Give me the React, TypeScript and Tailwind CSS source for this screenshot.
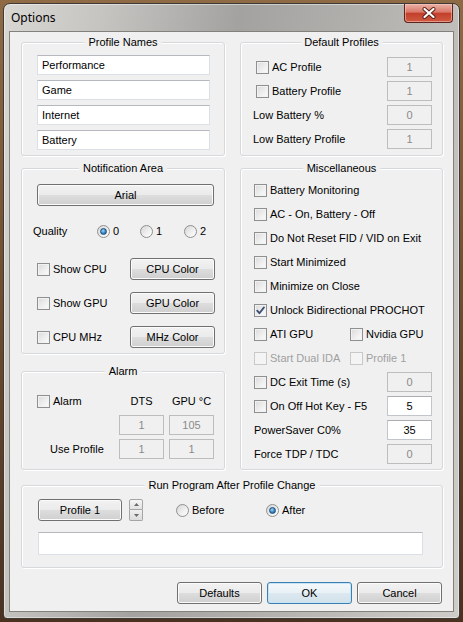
import React from 'react';

const btnGray =
  'rounded-[3px] border border-[#707070] bg-[linear-gradient(to_bottom,#f2f2f2_0%,#ebebeb_48%,#dddddd_52%,#cfcfcf_100%)] shadow-[inset_0_0_0_1px_#fbfbfb] flex items-center justify-center text-black';
const btnDefault =
  'rounded-[3px] border border-[#3c7fb1] bg-[linear-gradient(to_bottom,#f4f8fa_0%,#e9f1f6_48%,#dce8f0_52%,#d2e1ea_100%)] shadow-[inset_0_0_0_1px_#c4e5f6] flex items-center justify-center text-black';

function GroupBox({ title, className = '', children }: { title: string; className?: string; children: React.ReactNode }) {
  return (
    <div
      className={`relative rounded-[3px] border border-[#d5d9dc] shadow-[inset_1px_1px_0_#ffffff,1px_1px_0_#ffffff] ${className}`}
    >
      <span className="absolute left-1/2 top-[-8px] -translate-x-1/2 bg-[#f0f0f0] px-[4px] leading-[14px] whitespace-nowrap">
        {title}
      </span>
      {children}
    </div>
  );
}

function CheckBox({ label, checked = false, disabled = false }: { label: string; checked?: boolean; disabled?: boolean }) {
  return (
    <label className={`flex items-center gap-[3px] whitespace-nowrap ${disabled ? 'text-[#a0a0a0]' : 'text-black'}`}>
      <span
        className={`relative w-[13px] h-[13px] shrink-0 border ${
          disabled
            ? 'border-[#c8c8c8] bg-[#f4f4f4]'
            : 'border-[#8e8f8f] bg-[linear-gradient(135deg,#dadada_0%,#f0f0f0_60%,#fbfbfb_100%)] shadow-[inset_0_0_0_1px_#f2f2f2]'
        }`}
      >
        {checked && (
          <svg viewBox="0 0 11 11" className="absolute inset-0 w-[11px] h-[11px]">
            <path d="M2.2 5.6 L4.4 8.2 L9 2.4" fill="none" stroke="#3b4e72" strokeWidth="1.8" strokeLinecap="round" strokeLinejoin="round" />
          </svg>
        )}
      </span>
      {label}
    </label>
  );
}

function Radio({ label, checked = false }: { label: string; checked?: boolean }) {
  return (
    <label className="flex items-center gap-[3px] whitespace-nowrap">
      <span className="relative w-[13px] h-[13px] shrink-0 rounded-full border border-[#8e8f8f] bg-[linear-gradient(135deg,#d6d6d6_0%,#f1f1f1_60%,#fdfdfd_100%)] flex items-center justify-center">
        {checked && (
          <span className="w-[7px] h-[7px] rounded-full border border-[#1d4f7c] bg-[radial-gradient(circle_at_40%_35%,#9bd6f7_0%,#3a84c0_55%,#1c5589_100%)]" />
        )}
      </span>
      {label}
    </label>
  );
}

function NumBox({ value, enabled = false }: { value: string; enabled?: boolean }) {
  return (
    <div
      className={`w-[45px] h-[20px] shrink-0 border flex items-center justify-center ${
        enabled ? 'border-[#c2c6cc] border-t-[#abadb3] bg-white text-black' : 'border-[#bdbdbd] bg-[#f0f0f0] text-[#8a8a8a]'
      }`}
    >
      {value}
    </div>
  );
}

function TextBox({ value = '', className = '' }: { value?: string; className?: string }) {
  return (
    <div className={`h-[20px] border border-[#dbdfe6] border-t-[#b5b8bf] bg-white pl-[4px] flex items-center ${className}`}>
      {value}
    </div>
  );
}

function Spinner() {
  return (
    <div className="w-[14px] h-[22px] flex flex-col">
      <div className="h-[11px] border border-[#a5a5a5] rounded-t-[2px] bg-[linear-gradient(to_bottom,#f6f6f6,#e2e2e2)] flex items-center justify-center">
        <svg viewBox="0 0 5 3" className="w-[5px] h-[3px]">
          <path d="M0 3 L2.5 0 L5 3 Z" fill="#6a6a6a" />
        </svg>
      </div>
      <div className="h-[11px] border border-t-0 border-[#a5a5a5] rounded-b-[2px] bg-[linear-gradient(to_bottom,#f0f0f0,#dcdcdc)] flex items-center justify-center">
        <svg viewBox="0 0 5 3" className="w-[5px] h-[3px]">
          <path d="M0 0 L2.5 3 L5 0 Z" fill="#6a6a6a" />
        </svg>
      </div>
    </div>
  );
}

export default function App() {
  return (
    <div className="w-[463px] h-[622px] p-[3px] bg-[linear-gradient(to_bottom,#8e6b45_0%,#6d4c2f_50%,#4a3120_100%)] font-['Liberation_Sans',Arial,sans-serif] text-[11px] text-black">
      <div className="w-[457px] h-[616px] flex flex-col rounded-t-[7px] rounded-b-[4px] border border-[#3f3a36] bg-[linear-gradient(100deg,#d9d7d4_0%,#c6c4c1_18%,#a3a2a0_42%,#b3b1ae_65%,#cfcdca_100%)] shadow-[inset_0_0_0_1px_rgba(255,255,255,0.45)]">
        {/* title bar */}
        <div className="h-[27px] flex items-start justify-between pl-[7px] pr-[6px]">
          <span className="mt-[6px] font-['Noto_Sans','Open_Sans',sans-serif] text-[12px] leading-[16px] text-black">Options</span>
          <button className="w-[49px] h-[19px] rounded-b-[4px] border border-t-0 border-[#5e241b] bg-[linear-gradient(to_bottom,#eab2a5_0%,#d9786a_45%,#c4402b_52%,#cf5a42_100%)] shadow-[inset_0_0_0_1px_rgba(255,210,200,0.5)] flex items-center justify-center">
            <svg viewBox="0 0 14 12" className="w-[14px] h-[12px]">
              <path d="M2.5 2 L11.5 10 M11.5 2 L2.5 10" stroke="#5a1f16" strokeWidth="4" strokeLinecap="round" />
              <path d="M2.5 2 L11.5 10 M11.5 2 L2.5 10" stroke="#ffffff" strokeWidth="2.2" strokeLinecap="round" />
            </svg>
          </button>
        </div>

        {/* client area */}
        <div className="mx-[5px] h-[581px] border border-[#84807c] bg-[#f0f0f0] pt-[10px] pl-[11px] pr-[10px] flex flex-col">
          <div className="flex gap-[15px]">
            {/* left column */}
            <div className="w-[204px] flex flex-col">
              <GroupBox title="Profile Names" className="h-[114px] pt-[12px] pl-[15px] pr-[14px] flex flex-col gap-[5px]">
                <TextBox value="Performance" />
                <TextBox value="Game" />
                <TextBox value="Internet" />
                <TextBox value="Battery" />
              </GroupBox>

              <GroupBox title="Notification Area" className="mt-[12px] h-[186px] pt-[15px] pl-[15px] pr-[9px] flex flex-col">
                <button className={`${btnGray} w-[177px] h-[22px]`}>Arial</button>
                <div className="mt-[15px] h-[20px] flex items-center -ml-[4px]">
                  <span className="w-[64px]">Quality</span>
                  <div className="w-[43px]">
                    <Radio label="0" checked />
                  </div>
                  <div className="w-[44px]">
                    <Radio label="1" />
                  </div>
                  <Radio label="2" />
                </div>
                <div className="mt-[17px] flex flex-col gap-[12px]">
                  <div className="h-[22px] flex items-center justify-between">
                    <CheckBox label="Show CPU" />
                    <button className={`${btnGray} w-[85px] h-[22px]`}>CPU Color</button>
                  </div>
                  <div className="h-[22px] flex items-center justify-between">
                    <CheckBox label="Show GPU" />
                    <button className={`${btnGray} w-[85px] h-[22px]`}>GPU Color</button>
                  </div>
                  <div className="h-[22px] flex items-center justify-between">
                    <CheckBox label="CPU MHz" />
                    <button className={`${btnGray} w-[85px] h-[22px]`}>MHz Color</button>
                  </div>
                </div>
              </GroupBox>

              <GroupBox title="Alarm" className="mt-[17px] h-[99px] pt-[19px] pl-[15px] pr-[9px] flex flex-col gap-[4px]">
                <div className="h-[20px] flex items-center">
                  <div className="w-[82px]">
                    <CheckBox label="Alarm" />
                  </div>
                  <span className="w-[45px] text-center">DTS</span>
                  <span className="ml-[5px] w-[45px] text-center">GPU °C</span>
                </div>
                <div className="h-[20px] flex items-center">
                  <div className="w-[82px]" />
                  <NumBox value="1" />
                  <div className="ml-[5px]">
                    <NumBox value="105" />
                  </div>
                </div>
                <div className="h-[20px] flex items-center">
                  <span className="w-[82px] pl-[13px]">Use Profile</span>
                  <NumBox value="1" />
                  <div className="ml-[5px]">
                    <NumBox value="1" />
                  </div>
                </div>
              </GroupBox>
            </div>

            {/* right column */}
            <div className="w-[203px] flex flex-col">
              <GroupBox title="Default Profiles" className="h-[114px] pt-[14px] pl-[12px] pr-[10px] flex flex-col gap-[4px]">
                <div className="h-[20px] flex items-center justify-between">
                  <div className="ml-[3px]">
                    <CheckBox label="AC Profile" />
                  </div>
                  <NumBox value="1" />
                </div>
                <div className="h-[20px] flex items-center justify-between">
                  <div className="ml-[3px]">
                    <CheckBox label="Battery Profile" />
                  </div>
                  <NumBox value="1" />
                </div>
                <div className="h-[20px] flex items-center justify-between">
                  <span>Low Battery %</span>
                  <NumBox value="0" />
                </div>
                <div className="h-[20px] flex items-center justify-between">
                  <span>Low Battery Profile</span>
                  <NumBox value="1" />
                </div>
              </GroupBox>

              <GroupBox title="Miscellaneous" className="mt-[12px] h-[302px] pt-[11px] pl-[13px] pr-[10px] flex flex-col gap-[4px]">
                <div className="h-[20px] flex items-center">
                  <CheckBox label="Battery Monitoring" />
                </div>
                <div className="h-[20px] flex items-center">
                  <CheckBox label="AC - On, Battery - Off" />
                </div>
                <div className="h-[20px] flex items-center">
                  <CheckBox label="Do Not Reset FID / VID on Exit" />
                </div>
                <div className="h-[20px] flex items-center">
                  <CheckBox label="Start Minimized" />
                </div>
                <div className="h-[20px] flex items-center">
                  <CheckBox label="Minimize on Close" />
                </div>
                <div className="h-[20px] flex items-center">
                  <CheckBox label="Unlock Bidirectional PROCHOT" checked />
                </div>
                <div className="h-[20px] flex items-center">
                  <div className="w-[96px]">
                    <CheckBox label="ATI GPU" />
                  </div>
                  <CheckBox label="Nvidia GPU" />
                </div>
                <div className="h-[20px] flex items-center">
                  <div className="w-[96px]">
                    <CheckBox label="Start Dual IDA" disabled />
                  </div>
                  <CheckBox label="Profile 1" disabled />
                </div>
                <div className="h-[20px] flex items-center justify-between">
                  <CheckBox label="DC Exit Time (s)" />
                  <NumBox value="0" />
                </div>
                <div className="h-[20px] flex items-center justify-between">
                  <CheckBox label="On Off Hot Key - F5" />
                  <NumBox value="5" enabled />
                </div>
                <div className="h-[20px] flex items-center justify-between">
                  <span>PowerSaver C0%</span>
                  <NumBox value="35" enabled />
                </div>
                <div className="h-[20px] flex items-center justify-between">
                  <span>Force TDP / TDC</span>
                  <NumBox value="0" />
                </div>
              </GroupBox>
            </div>
          </div>

          <GroupBox title="Run Program After Profile Change" className="mt-[15px] h-[83px] pt-[13px] pl-[16px] pr-[19px] flex flex-col">
            <div className="h-[22px] flex items-center">
              <button className={`${btnGray} w-[84px] h-[22px]`}>Profile 1</button>
              <div className="ml-[7px]">
                <Spinner />
              </div>
              <div className="ml-[33px] w-[90px]">
                <Radio label="Before" />
              </div>
              <Radio label="After" checked />
            </div>
            <TextBox className="mt-[11px] h-[23px]" />
          </GroupBox>

          <div className="mt-[14px] flex justify-end gap-[5px] pr-[1px]">
            <button className={`${btnGray} w-[85px] h-[22px]`}>Defaults</button>
            <button className={`${btnDefault} w-[85px] h-[22px]`}>OK</button>
            <button className={`${btnGray} w-[85px] h-[22px]`}>Cancel</button>
          </div>
        </div>
      </div>
    </div>
  );
}
